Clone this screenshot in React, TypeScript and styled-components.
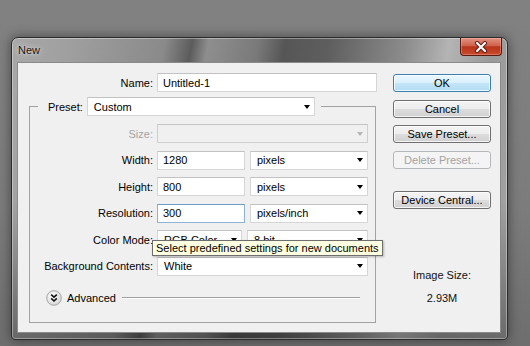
import React from "react";
import styled, { createGlobalStyle } from "styled-components";

const GlobalStyle = createGlobalStyle`
  html, body {
    margin: 0;
    padding: 0;
  }
  body {
    width: 530px;
    height: 346px;
    overflow: hidden;
    background: linear-gradient(180deg, #818181 0%, #7c7c7c 60%, #6e6e6e 100%);
    font-family: "Liberation Sans", Arial, sans-serif;
    font-size: 11px;
    color: #000;
  }
`;

const Desktop = styled.div`
  box-sizing: border-box;
  height: 346px;
  padding: 37px 0 0 11px;
`;

const Window = styled.div`
  box-sizing: border-box;
  width: 497px;
  height: 303px;
  display: flex;
  flex-direction: column;
  border: 1px solid #2c2c2c;
  border-radius: 7px 7px 4px 4px;
  background: linear-gradient(180deg, rgba(0, 0, 0, 0) 55%, rgba(0, 0, 0, 0.35) 100%),
    linear-gradient(
      100deg,
      #a8a8a8 0%,
      #a0a0a0 10%,
      #8a8a8a 28%,
      #5c5c5c 33%,
      #8e8e8e 36%,
      #7a7a7a 45%,
      #565656 50%,
      #5e5e5e 58%,
      #8c8c8c 72%,
      #b4b4b4 80%,
      #9a9a9a 88%,
      #a4a4a4 100%
    );
  box-shadow: 0 0 12px rgba(0, 0, 0, 0.45), inset 0 0 0 1px rgba(255, 255, 255, 0.35);
`;

const TitleBar = styled.div`
  height: 24px;
  display: flex;
  align-items: center;
  justify-content: space-between;
  padding: 0 5px 0 6px;
`;

const Title = styled.span`
  color: #161616;
  text-shadow: 0 0 6px rgba(255, 255, 255, 0.7), 0 0 2px rgba(255, 255, 255, 0.5);
`;

const CloseButton = styled.div`
  align-self: flex-start;
  width: 42px;
  height: 18px;
  box-sizing: border-box;
  display: flex;
  align-items: center;
  justify-content: center;
  border: 1px solid #5a1a10;
  border-top: none;
  border-radius: 0 0 4px 4px;
  background: linear-gradient(180deg, #e29484 0%, #d0624c 45%, #b83418 52%, #c94a2c 100%);
  box-shadow: inset 0 0 0 1px rgba(255, 200, 190, 0.35);
`;

const Client = styled.div`
  flex: 1;
  margin: 0 6px 6px 5px;
  display: flex;
  padding: 10px 0 0 11px;
  background: #f0f0f0;
  border: 1px solid #8a8a8a;
`;

const LeftColumn = styled.div`
  width: 347px;
  display: flex;
  flex-direction: column;
`;

const RightColumn = styled.div`
  width: 98px;
  margin-left: 17px;
  padding-top: 1px;
  display: flex;
  flex-direction: column;
  align-items: center;
`;

const NameRow = styled.div`
  display: grid;
  grid-template-columns: 124px 220px;
  column-gap: 4px;
  height: 19px;
`;

const Label = styled.span<{ $disabled?: boolean }>`
  align-self: center;
  text-align: right;
  white-space: nowrap;
  color: ${(p) => (p.$disabled ? "#a3a3a3" : "#000")};
`;

const TextBox = styled.div<{ $focus?: boolean; $w?: number }>`
  box-sizing: border-box;
  height: 19px;
  width: ${(p) => (p.$w ? `${p.$w}px` : "auto")};
  flex: ${(p) => (p.$w ? "none" : "1")};
  display: flex;
  align-items: center;
  padding-left: 5px;
  background: #fff;
  border: 1px solid ${(p) => (p.$focus ? "#8db2d6" : "#d6d6d6")};
  border-top-color: ${(p) => (p.$focus ? "#6f9cc9" : "#c2c2c2")};
  white-space: nowrap;
  overflow: hidden;
`;

const Select = styled.div<{ $disabled?: boolean; $w?: number }>`
  box-sizing: border-box;
  height: 19px;
  width: ${(p) => (p.$w ? `${p.$w}px` : "auto")};
  flex: ${(p) => (p.$w ? "none" : "1")};
  display: flex;
  align-items: center;
  justify-content: space-between;
  padding: 0 4px 0 6px;
  background: ${(p) => (p.$disabled ? "#f0f0f0" : "#fff")};
  border: 1px solid ${(p) => (p.$disabled ? "#cfcfcf" : "#d6d6d6")};
  border-top-color: ${(p) => (p.$disabled ? "#c4c4c4" : "#c2c2c2")};
  white-space: nowrap;
  overflow: hidden;
`;

const Arrow = styled.span<{ $disabled?: boolean }>`
  width: 0;
  height: 0;
  border-left: 3.5px solid transparent;
  border-right: 3.5px solid transparent;
  border-top: 4px solid ${(p) => (p.$disabled ? "#b4b4b4" : "#000")};
`;

const Group = styled.fieldset`
  box-sizing: border-box;
  width: 347px;
  min-width: 0;
  margin: 5px 0 0;
  padding: 8px 7px 16px 0;
  border: 1px solid #a2a2a2;
`;

const Legend = styled.legend`
  margin-left: 8px;
  padding: 0 6px 0 10px;
`;

const LegendRow = styled.div`
  display: flex;
  align-items: center;
  gap: 4px;
`;

const Rows = styled.div`
  display: grid;
  grid-template-columns: 123px 211px;
  grid-auto-rows: 19px;
  column-gap: 4px;
  row-gap: 7.5px;
`;

const Field = styled.div`
  position: relative;
  display: flex;
  gap: 5px;
`;

const Tooltip = styled.div`
  position: absolute;
  left: -5px;
  top: 10px;
  z-index: 2;
  height: 16px;
  box-sizing: border-box;
  padding: 0 3px;
  line-height: 14px;
  white-space: nowrap;
  background: #ffffe1;
  border: 1px solid #6e6e6e;
  box-shadow: 1px 1px 2px rgba(0, 0, 0, 0.25);
`;

const AdvancedRow = styled.div`
  height: 16px;
  margin-top: 14.5px;
  padding-left: 16px;
  display: flex;
  align-items: center;
`;

const AdvancedText = styled.span`
  margin-left: 5px;
`;

const Rule = styled.div`
  flex: 1;
  height: 1px;
  margin: 0 8px 0 6px;
  background: #a0a0a0;
  border-bottom: 1px solid #fff;
`;

const Button = styled.button<{ $default?: boolean; $gap?: number }>`
  width: 98px;
  height: 18px;
  box-sizing: border-box;
  margin-top: ${(p) => (p.$gap ?? 0)}px;
  padding: 0;
  font: inherit;
  color: #000;
  border: 1px solid ${(p) => (p.$default ? "#3c7fb1" : "#707070")};
  border-radius: 3px;
  background: ${(p) =>
    p.$default
      ? "linear-gradient(180deg, #eaf6fd 0%, #d9f0fc 50%, #c4e6f8 50%, #b2dbf3 100%)"
      : "linear-gradient(180deg, #f4f4f4 0%, #ececec 50%, #dddddd 50%, #d0d0d0 100%)"};
  box-shadow: inset 0 0 0 1px rgba(255, 255, 255, 0.75);
  &:disabled {
    color: #a3a3a3;
    border-color: #b5b8ba;
    background: #f4f4f4;
    box-shadow: none;
  }
`;

const InfoText = styled.div<{ $gap: number }>`
  margin-top: ${(p) => p.$gap}px;
  line-height: 13px;
  color: #111;
`;

const CloseIcon = () => (
  <svg width="14" height="12" viewBox="0 0 14 12">
    <path d="M3 2 L11 10 M11 2 L3 10" stroke="#5a1a10" strokeWidth="4" strokeLinecap="round" />
    <path d="M3 2 L11 10 M11 2 L3 10" stroke="#fff" strokeWidth="2.2" strokeLinecap="round" />
  </svg>
);

const AdvancedIcon = () => (
  <svg width="16" height="16" viewBox="0 0 16 16">
    <defs>
      <radialGradient id="adv" cx="0.4" cy="0.35" r="0.7">
        <stop offset="0" stopColor="#ffffff" />
        <stop offset="1" stopColor="#d4d4d4" />
      </radialGradient>
    </defs>
    <circle cx="8" cy="8" r="7.3" fill="url(#adv)" stroke="#a4a4a4" strokeWidth="1" />
    <path d="M5.2 4.6 L8 7.2 L10.8 4.6 M5.2 8.4 L8 11 L10.8 8.4" fill="none" stroke="#111" strokeWidth="1.6" />
  </svg>
);

const Dropdown: React.FC<{ value?: string; disabled?: boolean; width?: number }> = ({
  value,
  disabled,
  width,
}) => (
  <Select $disabled={disabled} $w={width}>
    <span>{value}</span>
    <Arrow $disabled={disabled} />
  </Select>
);

export default function App() {
  return (
    <>
      <GlobalStyle />
      <Desktop>
        <Window>
          <TitleBar>
            <Title>New</Title>
            <CloseButton>
              <CloseIcon />
            </CloseButton>
          </TitleBar>
          <Client>
            <LeftColumn>
              <NameRow>
                <Label>Name:</Label>
                <TextBox>Untitled-1</TextBox>
              </NameRow>
              <Group>
                <Legend>
                  <LegendRow>
                    <Label>Preset:</Label>
                    <Dropdown value="Custom" width={228} />
                  </LegendRow>
                </Legend>
                <Rows>
                  <Label $disabled>Size:</Label>
                  <Field>
                    <Dropdown disabled />
                  </Field>
                  <Label>Width:</Label>
                  <Field>
                    <TextBox $w={88}>1280</TextBox>
                    <Dropdown value="pixels" />
                  </Field>
                  <Label>Height:</Label>
                  <Field>
                    <TextBox $w={88}>800</TextBox>
                    <Dropdown value="pixels" />
                  </Field>
                  <Label>Resolution:</Label>
                  <Field>
                    <TextBox $w={88} $focus>
                      300
                    </TextBox>
                    <Dropdown value="pixels/inch" />
                  </Field>
                  <Label>Color Mode:</Label>
                  <Field>
                    <Dropdown value="RGB Color" width={85} />
                    <Dropdown value="8 bit" />
                    <Tooltip>Select predefined settings for new documents</Tooltip>
                  </Field>
                  <Label>Background Contents:</Label>
                  <Field>
                    <Dropdown value="White" />
                  </Field>
                </Rows>
                <AdvancedRow>
                  <AdvancedIcon />
                  <AdvancedText>Advanced</AdvancedText>
                  <Rule />
                </AdvancedRow>
              </Group>
            </LeftColumn>
            <RightColumn>
              <Button $default>OK</Button>
              <Button $gap={7.5}>Cancel</Button>
              <Button $gap={7.5}>Save Preset...</Button>
              <Button $gap={7.5} disabled>
                Delete Preset...
              </Button>
              <Button $gap={22.5}>Device Central...</Button>
              <InfoText $gap={59.5}>Image Size:</InfoText>
              <InfoText $gap={10}>2.93M</InfoText>
            </RightColumn>
          </Client>
        </Window>
      </Desktop>
    </>
  );
}
